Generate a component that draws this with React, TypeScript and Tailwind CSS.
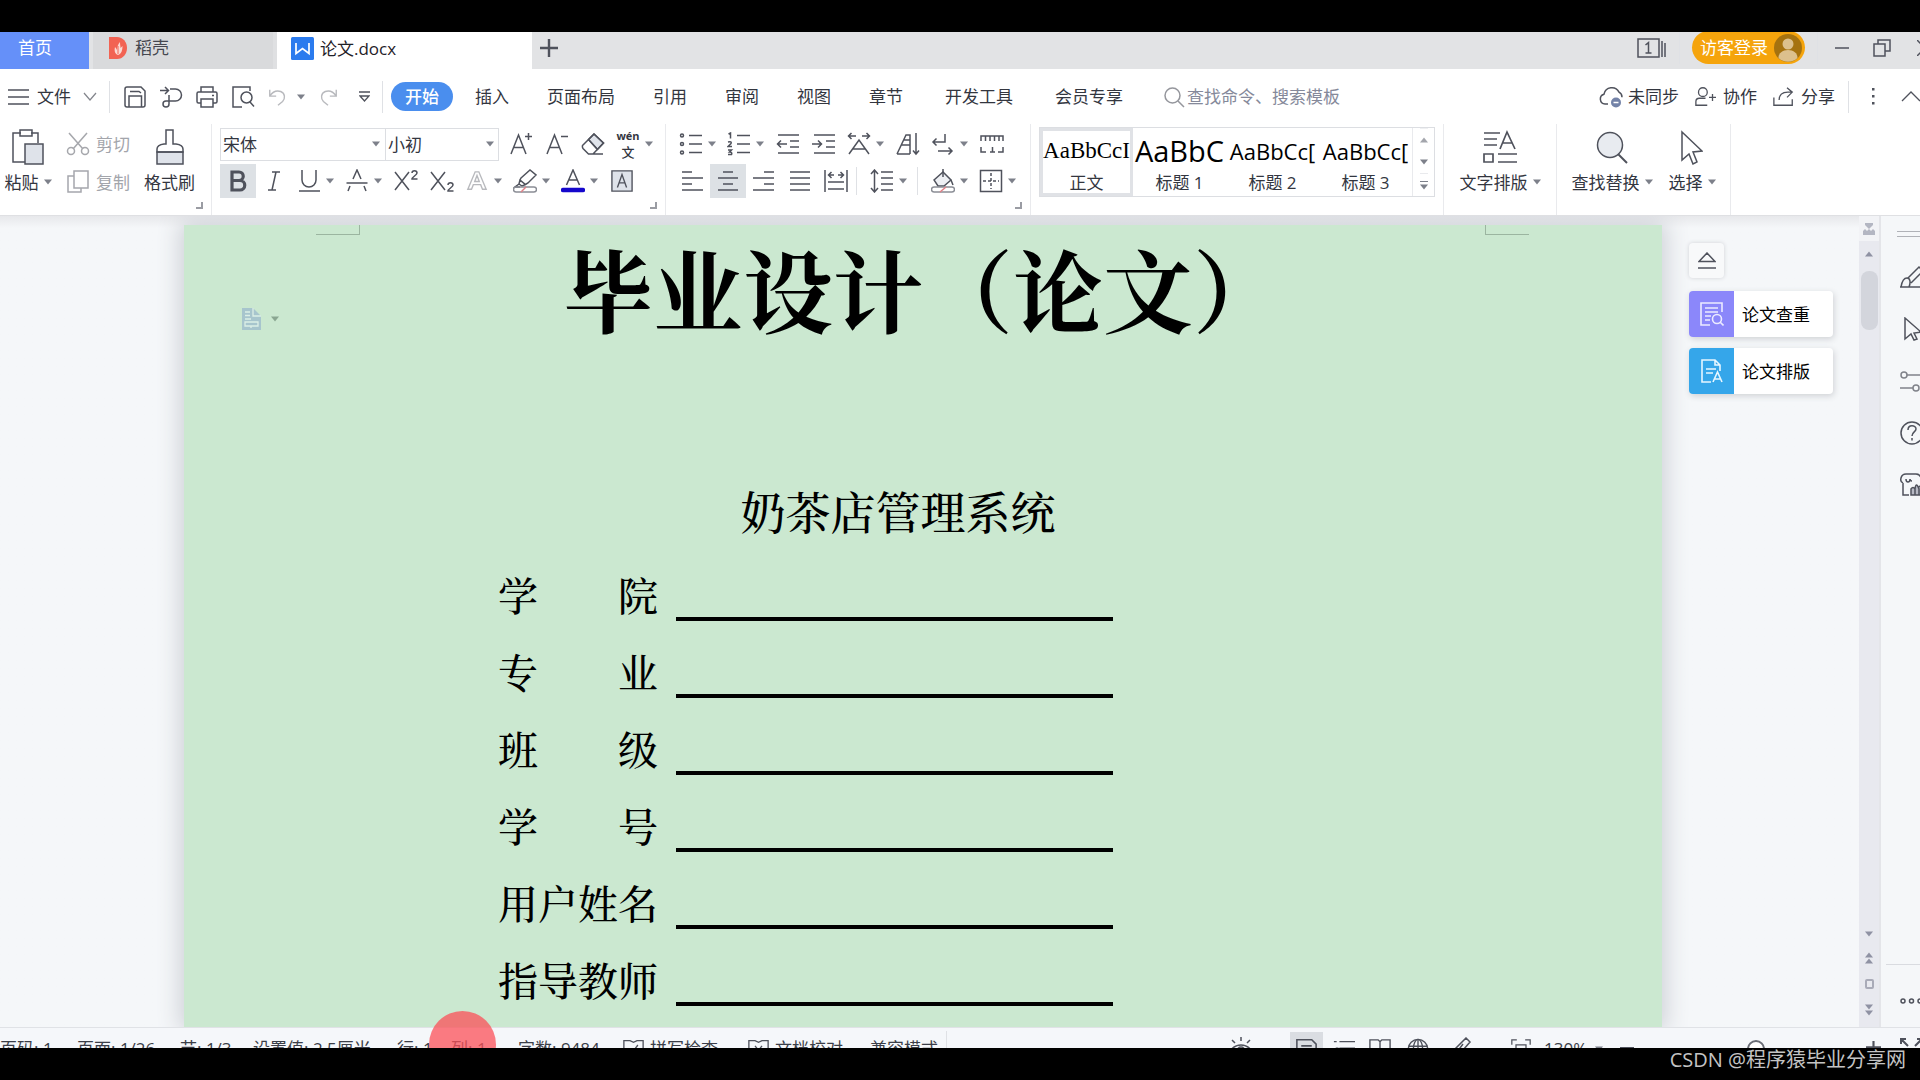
import type { ReactNode } from 'react';

const STROKE = '#4f525c';

type IconProps = {
  children: ReactNode;
  box?: string;
  className?: string;
  width?: number;
};

function Icon({ children, box = '0 0 24 24', className = 'size-6', width = 1.5 }: IconProps) {
  return (
    <svg viewBox={box} className={`shrink-0 ${className}`} fill="none" stroke={STROKE} strokeWidth={width} aria-hidden="true">
      {children}
    </svg>
  );
}

function Caret({ className = 'text-[#7d808a]' }: { className?: string }) {
  return (
    <svg viewBox="0 0 8 6" className={`h-[6px] w-2 shrink-0 ${className}`} fill="currentColor" aria-hidden="true">
      <path d="M0 .5h8L4 5.5z" />
    </svg>
  );
}

function Divider({ className = 'h-9' }: { className?: string }) {
  return <span className={`w-px shrink-0 bg-[#dfe1e5] ${className}`} />;
}

function Tool({ label, children, caret, active }: { label: string; children: ReactNode; caret?: boolean; active?: boolean }) {
  if (caret) {
    return (
      <button aria-label={label} className="flex h-[34px] w-12 items-center">
        <span className="flex w-[34px] justify-center">{children}</span>
        <Caret />
      </button>
    );
  }
  return (
    <button aria-label={label} className={`flex h-[34px] w-9 items-center justify-center ${active ? 'bg-[#dde1e5]' : ''}`}>
      {children}
    </button>
  );
}

function Corner() {
  return <span className="absolute right-2 bottom-[6px] size-[7px] border-r-2 border-b-2 border-[#9a9ca3]" />;
}

function TitleBar() {
  return (
    <header className="flex h-[37px] shrink-0 bg-[#e2e3e5] whitespace-nowrap">
      <button className="w-[89px] bg-[#6590f9] pr-8 pb-[6px] pl-[18px] text-left text-white">首页</button>
      <button className="ml-1 flex w-[184px] items-center gap-2 border-r-4 border-[#dfe0e2] bg-[#d9dadc] pb-[6px] pl-4 text-[#45474f]">
        <svg viewBox="0 0 18 22" className="h-[22px] w-[18px]" aria-hidden="true">
          <path d="M0 0h8c6 0 10 5 10 11s-4 11-10 11H0z" fill="#f26353" />
          <path d="M9 18c-3-1-4-4-3-8 1 1 1.500 2 2 3 0-3 1-6 3-8 0 3 .5 4 .5 6l2-2c0 4-1 8-4.500 9z" fill="#fbd9d3" />
          <path d="M9 17V9" stroke="#f26353" />
        </svg>
        稻壳
      </button>
      <button className="flex w-[255px] items-center gap-[6px] bg-white pb-[4px] pl-[14px] text-[#1f2128]">
        <svg viewBox="0 0 23 23" className="size-[23px]" aria-hidden="true">
          <rect width="23" height="23" rx="1.500" fill="#2b7bee" />
          <path d="M5 6v10.500l6.500-5 6.500 5V6" fill="none" stroke="#fff" strokeWidth="1.700" />
        </svg>
        论文.docx
      </button>
      <button aria-label="新建标签" className="flex w-[33px] items-center justify-center pb-[6px]">
        <Icon className="size-[18px]" box="0 0 18 18" width={2.4}><path d="M9 0v18M0 9h18" /></Icon>
      </button>
      <div className="ml-auto flex h-8 items-center">
        <button aria-label="窗口列表" className="mr-[13px]">
          <Icon className="h-5 w-[29px]" box="0 0 29 20" width={1.5}>
            <path d="M1 1h21v18H1zM25 3v16M28 5v14M8.500 7l3-2.500V15M8.500 15h6" />
          </Icon>
        </button>
        <Divider className="h-8" />
        <button className="mx-3 -mt-px flex h-[33px] items-center gap-[6px] rounded-full bg-[#f5a40c] pr-[3px] pl-2 text-white">
          访客登录
          <svg viewBox="0 0 28 28" className="size-7" aria-hidden="true">
            <circle cx="14" cy="14" r="14" fill="#a5720f" />
            <circle cx="14" cy="10" r="5.500" fill="#dcc08d" />
            <path d="M4.500 24c0-5 4-8 9.500-8s9.500 3 9.500 8c-5 5-14 5-19 0z" fill="#dcc08d" />
          </svg>
        </button>
        <Divider className="h-8" />
        <button aria-label="最小化" className="ml-[17px]"><Icon className="size-[14px]" box="0 0 14 14"><path d="M0 7h14" /></Icon></button>
        <button aria-label="还原" className="ml-6">
          <Icon className="size-[18px]" box="0 0 18 18"><path d="M1 5h11v12H1zM5 5V1h12v11h-5" /></Icon>
        </button>
        <button aria-label="关闭" className="ml-[26px] w-[3px] overflow-hidden"><Icon className="size-4" box="0 0 16 16"><path d="M0 0l16 16M16 0L0 16" /></Icon></button>
      </div>
    </header>
  );
}

function MenuBar() {
  return (
    <div className="flex h-[55px] shrink-0 items-center whitespace-nowrap text-[#33363f]">
      <button className="ml-2 flex items-center gap-2">
        <Icon className="h-5 w-[21px]" box="0 0 21 20"><path d="M0 3h21M0 10h21M0 17h21" /></Icon>
        文件
        <Icon className="ml-1 h-[9px] w-[14px] opacity-70" box="0 0 14 9" width={1.2}><path d="M1 1l6 7 6-7" /></Icon>
      </button>
      <Divider className="mr-[13px] ml-3 h-8" />
      <div className="flex items-center gap-3">
        <button aria-label="保存">
          <Icon><path d="M2 4q0-2 2-2h14l4 4v14q0 2-2 2H4q-2 0-2-2zM6 22V11h12.500v11M7 6.500h9l2 1.500" /></Icon>
        </button>
        <button aria-label="输出为PDF">
          <Icon><path d="M1 5.500h8M6 2L9.500 5.500 6 9M11 4h5.500a5.500 5.500 0 010 12H7a3 3 0 100 6c2 0 3-1.500 3-3V10" /></Icon>
        </button>
        <button aria-label="打印">
          <Icon><path d="M6 7V2h12v5M6 18H3.500Q2 18 2 16.500v-8Q2 7 3.500 7h17Q22 7 22 8.500v8q0 1.500-1.500 1.500H18M6 14h12v8H6zM17 10.500h2" /></Icon>
        </button>
        <button aria-label="打印预览">
          <Icon><path d="M11 22H2V2h17v4M19 17l4 4.500" /><circle cx="15.500" cy="12.500" r="5.500" /></Icon>
        </button>
      </div>
      <div className="ml-3 flex items-center gap-2">
        <button aria-label="撤销" className="opacity-40"><Icon className="size-[22px]"><path d="M3 4v7h7M3 11c4-6 9-6 12-5 5 2 5 8 2 11l-5 4" /></Icon></button>
        <Caret />
        <button aria-label="恢复" className="ml-1 opacity-40"><Icon className="size-[22px]"><path d="M21 4v7h-7M21 11c-4-6-9-6-12-5-5 2-5 8-2 11l5 4" /></Icon></button>
        <button aria-label="自定义快速访问" className="ml-3"><Icon className="h-3 w-[11px]" box="0 0 11 12" width={1.3}><path d="M0 1h11M1 5l4.500 5L10 5z" /></Icon></button>
      </div>
      <Divider className="mr-2 ml-3 h-8" />
      <nav className="flex items-center gap-[38px]">
        <a href="#start" className="-mr-4 rounded-full bg-[#4a8eee] px-[14px] py-[2px] font-medium text-white">开始</a>
        <a href="#insert">插入</a>
        <a href="#layout">页面布局</a>
        <a href="#reference">引用</a>
        <a href="#review">审阅</a>
        <a href="#view">视图</a>
        <a href="#chapter">章节</a>
      </nav>
      <nav className="ml-[42px] flex items-center gap-[42px]">
        <a href="#dev">开发工具</a>
        <a href="#member">会员专享</a>
      </nav>
      <label className="ml-10 flex items-center gap-[2px]">
        <Icon className="size-[22px] opacity-60" box="0 0 22 22"><circle cx="9.500" cy="9.500" r="7.500" /><path d="M15 15l6 6" /></Icon>
        <input aria-label="搜索" placeholder="查找命令、搜索模板" className="w-[180px] bg-transparent outline-none placeholder:text-[#85899a]" />
      </label>
      <div className="ml-auto flex items-center">
        <button className="mr-4 flex items-center gap-[5px]">
          <Icon>
            <path d="M9 19H6a5 5 0 01-1-9.800 8 8 0 0115-2c2 1 3 3 3 5" />
            <circle cx="17" cy="17.500" r="5" fill="#7483a8" stroke="none" /><path d="M14.500 17.500h5" stroke="#fff" />
          </Icon>
          未同步
        </button>
        <button className="mr-4 flex items-center gap-[7px]">
          <Icon className="size-[21px]"><circle cx="9" cy="7" r="5" /><path d="M14 22H1v-4q0-4 4-4h7M16 13h8M20 9v8" /></Icon>
          协作
        </button>
        <button className="flex items-center gap-[7px]">
          <Icon className="size-[21px]"><path d="M1 13v9h21v-7M7 16c0-6 4-9 10-9h4M16 2l6 5-6 6" /></Icon>
          分享
        </button>
        <Divider className="ml-[13px] h-8" />
        <button aria-label="更多" className="ml-[23px]">
          <svg viewBox="0 0 4 18" className="h-[18px] w-1" fill={STROKE}><path d="M0 0h2.500v2.500H0zM0 7h2.500v2.500H0zM0 14h2.500v2.500H0z" /></svg>
        </button>
        <button aria-label="折叠功能区" className="ml-[25px] w-[19px] overflow-hidden"><Icon className="h-[11px] w-5" box="0 0 20 11" width={1.3}><path d="M1 10l9-9 9 9" /></Icon></button>
      </div>
    </div>
  );
}

function BigLabel({ children }: { children: ReactNode }) {
  return <span className="flex h-[26px] items-center gap-[5px]">{children}</span>;
}

const styleCards = [
  { name: '正文', sample: 'AaBbCcI', look: "font-['Liberation_Serif'] text-[23px]" },
  { name: '标题 1', sample: 'AaBbC', look: "font-['Open_Sans'] text-[29px] font-medium" },
  { name: '标题 2', sample: 'AaBbCc[', look: "font-['Open_Sans'] text-[22px] font-medium" },
  { name: '标题 3', sample: 'AaBbCc[', look: "font-['Open_Sans'] text-[22px] font-medium" },
];

function Ribbon() {
  return (
    <div className="flex h-[91px] shrink-0 whitespace-nowrap text-[#33363f]">
      <section className="relative flex w-[212px] border-r border-[#e9eaed] pt-[5px]">
        <button className="flex w-14 flex-col items-center gap-1">
          <Icon className="h-9 w-8" box="0 0 32 36">
            <path d="M9 4H1v29h12M19 4h7v10" /><path d="M8 1h12v6H8z" /><path d="M13 15h18v20H13z" fill="#dfe3ea" />
          </Icon>
          <BigLabel>粘贴<Caret /></BigLabel>
        </button>
        <div className="ml-[10px] flex flex-col text-[#a3a5ab]">
          <button className="-mt-[2px] flex h-[34px] items-center gap-[6px]">
            <Icon className="size-6 opacity-50"><path d="M3 1l14 16M21 1L7 17" /><circle cx="5" cy="19" r="3.500" /><circle cx="19" cy="19" r="3.500" /></Icon>
            剪切
          </button>
          <button className="mt-1 flex h-[34px] items-center gap-[6px]">
            <Icon className="size-6 opacity-50"><path d="M8 1h14v17H8zM8 6H2v16h13v-4" /></Icon>
            复制
          </button>
        </div>
        <button className="ml-[14px] flex flex-col items-center gap-1">
          <Icon className="h-9 w-7" box="0 0 28 36">
            <path d="M1 23h26v12H1z" fill="#dfe3ea" /><path d="M10 1h7v14h3q7 1 7 5v3H1v-3q0-4 7-5h2z" />
          </Icon>
          <BigLabel>格式刷</BigLabel>
        </button>
        <Corner />
      </section>

      <section className="relative w-[454px] border-r border-[#e9eaed] pt-[3px] pl-2">
        <div className="flex items-center">
          <div className="mr-1 flex h-[33px] w-[279px] border border-[#dcdee2]">
            <label className="relative flex w-[165px] items-center border-r border-[#dcdee2]">
              <select aria-label="字体" className="w-full appearance-none bg-transparent pl-[2px] outline-none"><option>宋体</option></select>
              <span className="pointer-events-none absolute right-[5px]"><Caret /></span>
            </label>
            <label className="relative flex flex-1 items-center">
              <select aria-label="字号" className="w-full appearance-none bg-transparent pl-[2px] outline-none"><option>小初</option></select>
              <span className="pointer-events-none absolute right-1"><Caret /></span>
            </label>
          </div>
          <Tool label="增大字号"><Icon><path d="M2 22L9.500 3 17 22M4.500 15.500h10M19.500 1v7M16 4.500h7" /></Icon></Tool>
          <Tool label="减小字号"><Icon><path d="M2 22L9.500 3 17 22M4.500 15.500h10M16 4.500h7" /></Icon></Tool>
          <Tool label="清除格式"><Icon><path d="M7.500 7.500L13 2l9.500 9-6 6.500z" fill="#dfe3ea" /><path d="M1.500 13.500L13 2l9.500 9L12 22H7.500L2 16.500q-1-1.500-.5-3zM7.500 7.500l9 10M7 22h15" /></Icon></Tool>
          <Tool label="拼音指南" caret>
            <span className="flex flex-col items-center text-[11px] font-bold"><span className="leading-[16px]">wén</span><span className="text-[13px] leading-[16px] font-medium">文</span></span>
          </Tool>
        </div>
        <div className="flex pt-[3px]">
          <Tool label="加粗" active><Icon width={3.2}><path d="M6 3h7a4.200 4.200 0 010 8.500H6zM6 11.500h8a4.700 4.700 0 010 9.500H6zM6 2v20" /></Icon></Tool>
          <Tool label="倾斜"><Icon><path d="M10 3h8M6 21h8M14 3l-4 18" /></Icon></Tool>
          <Tool label="下划线" caret><Icon><path d="M5 1v10a7 7 0 0014 0V1M2 22h21" /></Icon></Tool>
          <Tool label="删除线" caret><Icon><path d="M8 10l4-9 4 9M1.500 14h21M5 17l-2 5M19 17l2 5" /></Icon></Tool>
          <Tool label="上标"><Icon><path d="M1 3l14 18M15 3L1 21M18 4c0-3 5-3 5 0 0 2-5 4-5 6h5.500" /></Icon></Tool>
          <Tool label="下标"><Icon><path d="M1 3l14 18M15 3L1 21M18 16c0-3 5-3 5 0 0 2-5 4-5 6h5.500" /></Icon></Tool>
          <Tool label="文字效果" caret><span className="opacity-40"><Icon className="size-[22px]"><path d="M2 21L10 2h4l8 19h-4l-2-5H8l-2 5zM9.500 12.500h5L12 6z" /></Icon></span></Tool>
          <Tool label="突出显示" caret>
            <Icon><path d="M8 9L17 1l6 5-8 8-2.500 1.500L7 11zM7 11l-1 4 3 2 3.500-1.500M6 15l-4 3h5" /><path d="M3 18h18q2.500 0 2.500 2.500T21 23H3Q.5 23 .5 20.500T3 18z" stroke="#8a8d95" /><path d="M8 23l5-5" stroke="#e07f86" /></Icon>
          </Tool>
          <Tool label="字体颜色" caret><Icon><path d="M5.500 16L12 1l6.500 15M8 11h8" /><path d="M2 21h20" stroke="#1507cc" strokeWidth="4.500" strokeLinecap="round" /></Icon></Tool>
          <Tool label="字符底纹"><Icon className="size-[22px]"><path d="M1 1h22v22H1z" fill="#dfe3ea" /><path d="M7 19l5-14 5 14M8.500 14h7" /></Icon></Tool>
        </div>
        <Corner />
      </section>

      <section className="relative w-[365px] border-r border-[#e9eaed] pt-[3px] pl-2">
        <div className="flex">
          <Tool label="项目符号" caret><Icon><path d="M10 3.500h13M10 12h13M10 20.500h13" /><circle cx="3" cy="3.500" r="1.500" /><circle cx="3" cy="12" r="1.500" /><circle cx="3" cy="20.500" r="1.500" /></Icon></Tool>
          <Tool label="编号" caret><Icon><path d="M10 3.500h13M10 12h13M10 20.500h13M1.500 2l2-1v5.500M1 10q4-1 3 1.500L1 14.500h4M1 18h3.500l-2 2q3 0 2 2.500H1" /></Icon></Tool>
          <Tool label="减少缩进"><Icon><path d="M2 3h21M14 9h9M14 15h9M2 21h21M1 12h10M5 8.500L1.500 12 5 15.500" /></Icon></Tool>
          <Tool label="增加缩进"><Icon><path d="M2 3h21M14 9h9M14 15h9M2 21h21M0 12h10M6 8.500L9.500 12 6 15.500" /></Icon></Tool>
          <Tool label="中文版式" caret><Icon><path d="M2 22L12 8l10 14M6 17h12M1 4h8M4.500 1L1.500 4l3 3M15 4h8M19.500 1l3 3-3 3" /></Icon></Tool>
          <Tool label="排序"><Icon><path d="M1 22L10 3h4v19M5.500 13H14M8 8h6M1 22h13M20 1v21M17 18.500l3 3.500 3-3.500" /></Icon></Tool>
          <Tool label="显示标记" caret><Icon><path d="M14 2v8H2M5.500 6.500L2 10l3.500 3.500M7 19h14M17.500 15.500L21 19l-3.500 3.500" /></Icon></Tool>
          <Tool label="标尺"><Icon><path d="M1 9V4h22v5M5.500 4v5M10 4v5M14.500 4v5M19 4v5M1 15v5h5M10 20h5M12.500 15v5M18 20h5v-5" /></Icon></Tool>
        </div>
        <div className="flex items-center pt-[3px]">
          <Tool label="左对齐"><Icon><path d="M2 3h10M2 9h21M2 15h10M2 21h21" /></Icon></Tool>
          <Tool label="居中" active><Icon><path d="M7 3h10M2 9h20M7 15h10M2 21h20" /></Icon></Tool>
          <Tool label="右对齐"><Icon><path d="M12 3h10M1 9h21M12 15h10M1 21h21" /></Icon></Tool>
          <Tool label="两端对齐"><Icon><path d="M2 3h20M2 9h20M2 15h20M2 21h20" /></Icon></Tool>
          <Tool label="分散对齐"><Icon><path d="M1 1v22M23 1v22M4 13h16M4 20h16M5 6h5M7.500 3L4.500 6l3 3M14 6h5M16.500 3l3 3-3 3" /></Icon></Tool>
          <Divider className="mr-2 ml-[2px] h-7" />
          <Tool label="行距" caret><Icon><path d="M11 3h12M11 9h12M11 15h12M11 21h12M4.500 1v22M1 5l3.500-4L8 5M1 19l3.500 4L8 19" /></Icon></Tool>
          <Divider className="mr-2 ml-1 h-7" />
          <Tool label="底纹颜色" caret>
            <Icon><path d="M3 11L12 3l8 8-7 6H7z" fill="#eef0f4" /><path d="M12 0v8M20 11l2 5" /><path d="M3 18h18q2.500 0 2.500 2.500T21 23H3Q.5 23 .5 20.500T3 18z" stroke="#8a8d95" /><path d="M9 23l6-5" stroke="#e07f86" /></Icon>
          </Tool>
          <Tool label="边框" caret><Icon><path d="M1.500 1.500h21v21h-21z" /><path d="M12 4v16M4 12h16" strokeDasharray="3 2" /></Icon></Tool>
        </div>
        <Corner />
      </section>

      <section className="w-[413px] border-r border-[#e9eaed] pt-[3px] pl-2">
        <div className="flex h-[70px] w-[396px] border border-[#dcdee2]">
          {styleCards.map((card, i) => (
            <button
              key={card.name}
              className={`flex w-[93px] shrink-0 flex-col items-center overflow-hidden ${i === 0 ? 'border-[3px] border-[#e0e2e6]' : 'pt-[3px]'}`}
            >
              <span className={`h-[42px] leading-[40px] text-black ${card.look}`}>{card.sample}</span>
              <span className="leading-[20px]">{card.name}</span>
            </button>
          ))}
          <div className="flex flex-1 flex-col items-center divide-y divide-[#e9eaed] border-l border-[#e9eaed]">
            <button aria-label="上一行" className="flex flex-1 rotate-180 items-center opacity-70"><Caret /></button>
            <button aria-label="下一行" className="flex flex-1 items-center"><Caret /></button>
            <button aria-label="更多样式" className="flex flex-1 flex-col items-center justify-center gap-[2px]"><span className="h-px w-2 bg-[#7d808a]" /><Caret /></button>
          </div>
        </div>
      </section>

      <section className="flex w-[113px] justify-center border-r border-[#e9eaed] pt-[5px]">
        <button className="flex flex-col items-center gap-1">
          <Icon className="h-9 w-[34px]" box="0 0 34 36" width={1.7}><path d="M1 4h16M1 10h13M1 16h13M17 20l7-17 8 17M20 14h9M1 25h9v8H1zM15 25h19M15 33h19" /></Icon>
          <BigLabel>文字排版<Caret /></BigLabel>
        </button>
      </section>
      <section className="flex w-[174px] justify-center gap-4 border-r border-[#e9eaed] pt-[5px]">
        <button className="flex flex-col items-center gap-1">
          <Icon className="h-9 w-8" box="0 0 32 36"><circle cx="14" cy="16" r="12.500" fill="#e8ebf0" /><path d="M22 25l9 9" strokeWidth="2" /></Icon>
          <BigLabel>查找替换<Caret /></BigLabel>
        </button>
        <button className="flex flex-col items-center gap-1">
          <Icon className="h-9 w-[22px]" box="0 0 22 36"><path d="M1 3l20 19-9 1 4 10-4 2-4-10-7 6z" /></Icon>
          <BigLabel>选择<Caret /></BigLabel>
        </button>
      </section>
    </div>
  );
}

const fields = ['学院', '专业', '班级', '学号', '用户姓名', '指导教师'];

function Paper() {
  return (
    <article className="relative flex-1 overflow-hidden bg-[#cbe8d0] font-['Noto_Serif_CJK_SC','Noto_Sans_CJK_SC',serif] text-black shadow-[0_0_22px_4px_#cdd0d6]">
      <span className="absolute top-0 left-[132px] h-[10px] w-11 border-r border-b border-[#9bb5a0]" />
      <span className="absolute top-0 right-[133px] h-[10px] w-11 border-b border-l border-[#9bb5a0]" />
      <button aria-label="段落布局" className="absolute top-[83px] left-[58px] flex items-center gap-[10px]">
        <svg viewBox="0 0 19 22" className="h-[22px] w-[19px]" aria-hidden="true">
          <path d="M0 0h11l8 8v14H0z" fill="#a7c5cd" />
          <path d="M11 0v8h8M3 4h5M3 7.500h5M3 11h6M3 14h13v4H3zM9 18v2" fill="none" stroke="#dcefe6" strokeWidth="1.300" />
        </svg>
        <Caret className="text-[#8aa691]" />
      </button>
      <h1 className="text-center text-[90px] leading-[124px] font-bold">毕业设计（论文）</h1>
      <h2 className="mt-[132px] pr-[50px] text-center text-[45px] leading-[60px] font-medium">奶茶店管理系统</h2>
      <dl className="mt-[15px] ml-[314px] text-[40px] leading-[75px] font-medium">
        {fields.map((name) => (
          <div key={name} className="flex h-[77px]">
            <dt className="flex w-40 justify-between">
              {name.split('').map((ch) => <span key={ch}>{ch}</span>)}
            </dt>
            <dd className="mt-[61px] ml-[18px] h-1 w-[437px] bg-black" />
          </div>
        ))}
      </dl>
    </article>
  );
}

function Workspace() {
  return (
    <main className="flex min-h-0 flex-1 overflow-hidden border-t border-[#dfe0e3] bg-[#f5f7f9]">
      <div className="flex flex-1 overflow-hidden bg-linear-to-b from-[#e7e8eb] to-[#f5f7f9] to-[12px] pt-[9px] pl-[184px]">
        <Paper />
        <aside className="z-10 flex w-[197px] flex-col items-start pt-[18px] pl-[27px]">
          <button aria-label="收起" className="flex size-[35px] items-center justify-center rounded bg-[#f8f9fa] shadow-[0_0_4px_#d0d2d6]">
            <Icon className="size-[18px]" box="0 0 18 18"><path d="M9 1l8 8.500H1zM0 16h18" /></Icon>
          </button>
          <button className="mt-[13px] flex h-[46px] w-36 items-center overflow-hidden rounded bg-white text-black shadow-[1px_2px_6px_#cfd1d5]">
            <span className="mr-2 flex h-full w-[45px] items-center justify-center bg-[#8b87fa]">
              <svg viewBox="0 0 24 24" className="size-6" fill="none" stroke="#ecebff" strokeWidth="1.600"><path d="M10 23H1V1h21v9M5 6h13M5 10h13M5 14h6M5 18h5" /><circle cx="17" cy="17" r="4.500" /><path d="M20 20l3.500 3.500" /></svg>
            </span>
            论文查重
          </button>
          <button className="mt-[11px] flex h-[46px] w-36 items-center overflow-hidden rounded bg-white text-black shadow-[1px_2px_6px_#cfd1d5]">
            <span className="mr-2 flex h-full w-[45px] items-center justify-center bg-[#35a6ea]">
              <svg viewBox="0 0 24 24" className="size-6" fill="none" stroke="#e6f6ff" strokeWidth="1.600"><path d="M11 23H2V1h13l5 5v6M15 1v5h5M6 10h10M6 14h7M13 23l4.500-10L22 23M14.500 20h6" /></svg>
            </span>
            论文排版
          </button>
        </aside>
      </div>
      <div className="flex w-5 flex-col items-center bg-[#e8e9ef]">
        <div className="flex h-[25px] w-full items-center justify-center bg-[#f2f3f6]">
          <svg viewBox="0 0 12 12" className="size-3" fill="#b3b6c2"><path d="M2 0h8v2L6 6 2 2zM0 8l2-2 2 2v4H0zM4 8l2-2 2 2v4H4zM8 8l2-2 2 2v4H8z" /></svg>
        </div>
        <span className="mt-[10px] rotate-180"><Caret className="text-[#8f92a3]" /></span>
        <span className="mt-[14px] h-[59px] w-[17px] rounded-lg bg-[#d3d5dc]" />
        <div className="mt-auto flex flex-col items-center gap-[15px] pb-[11px]">
          <Caret className="text-[#8f92a3]" />
          <span className="flex rotate-180 flex-col"><Caret className="text-[#8f92a3]" /><Caret className="text-[#8f92a3]" /></span>
          <span className="h-[10px] w-[9px] rounded-[2px] border-2 border-[#a9abb8]" />
          <span className="flex flex-col"><Caret className="text-[#8f92a3]" /><Caret className="text-[#8f92a3]" /></span>
        </div>
      </div>
      <div className="flex w-[41px] flex-col items-end overflow-hidden border-l-2 border-[#e4e5e9] pt-[15px]">
        <span className="h-[6px] w-[23px] border-y border-[#b0b2b8]" />
        <div className="mt-7 flex w-5 flex-col gap-7">
          <button aria-label="样式"><Icon><path d="M1 22c1-6 3-9 6-9s4 4 2 9zM8 13L19 2l4 4-12 12M0 22h24" /></Icon></button>
          <button aria-label="选择窗格"><Icon><path d="M5 1l16 14-7 1 3 6-3 1-3-6-6 5z" /></Icon></button>
          <button aria-label="属性" className="opacity-70"><Icon><circle cx="4" cy="6" r="3" /><path d="M7 6h17M0 19h13" /><circle cx="16" cy="19" r="3" /></Icon></button>
          <button aria-label="帮助"><Icon><circle cx="12" cy="12" r="11" /><path d="M8 9c0-6 8-5 8-1 0 3-4 3-4 7M12 17v2.500" /></Icon></button>
          <button aria-label="应用"><Icon><path d="M3 10Q0 9 1 5q1-4 5-4h10q4 0 5 4l1 5M3 10v12h6M6 6q0 3 2 3t2-3M10 6q0 2 2 2" /><path d="M11 22v-6q2-3 4 0 1-8 4 0v6zM15 16v6M19 14q3-3 3 0v8h-3" fill="#b7b9c4" /></Icon></button>
        </div>
        <span className="mt-auto h-px w-[34px] shrink-0 bg-[#d9dbe0]" />
        <button aria-label="更多工具" className="mt-8 mb-[22px] w-5 shrink-0"><Icon className="h-2 w-6" box="0 0 24 8"><circle cx="3" cy="4" r="2" /><circle cx="11.500" cy="4" r="2" /><circle cx="20" cy="4" r="2" /></Icon></button>
      </div>
    </main>
  );
}

function StatusBar() {
  return (
    <footer className="h-[21px] shrink-0 overflow-hidden border-t border-[#e0e2e6] bg-[#f5f7fa] whitespace-nowrap text-[#3b3e48]">
      <div className="flex h-[41px] items-center">
        <span className="w-[62px]">页码: 1</span>
        <Divider className="mr-[14px]" />
        <span className="w-[88px]">页面: 1/26</span>
        <Divider className="mr-[14px]" />
        <span className="w-[73px]">节: 1/3</span>
        <span className="w-[129px]">设置值: 2.5厘米</span>
        <Divider className="mr-[14px]" />
        <span className="w-[54px]">行: 1</span>
        <span className="w-[52px]">列: 1</span>
        <Divider className="mr-[14px]" />
        <span className="w-[91px]">字数: 9484</span>
        <Divider className="mr-[13px]" />
        <button className="flex w-[111px] items-center gap-[6px]">
          <Icon className="size-[21px]"><path d="M1 3h7l4 2 4-2h7v19H1zM7 12l4 4 6-8" /></Icon>拼写检查
        </button>
        <Divider className="mr-[13px]" />
        <button className="flex items-center gap-[6px]">
          <Icon className="size-[21px]"><path d="M1 3h7l4 2 4-2h7v19H1zM8 9l4 5 4-5M8 19l4-5 4 5" /></Icon>文档校对
        </button>
        <span className="mr-2 ml-[27px]">兼容模式</span>
        <Divider />
        <div className="ml-auto flex items-center">
          <button aria-label="护眼模式" className="mr-5"><Icon className="size-6"><path d="M1 14c6-8 16-8 22 0-6 8-16 8-22 0zM12 0v4M3 3l3 3M21 3l-3 3" /><circle cx="12" cy="14" r="4" /></Icon></button>
          <Divider className="mr-4" />
          <button aria-label="页面视图" className="mr-[10px] flex h-[34px] w-[33px] items-center justify-center bg-[#dadde2]"><Icon className="size-[21px]"><path d="M1 2h17l5 5v15H1zM6 9h12M6 15h12" strokeWidth="1.800" /></Icon></button>
          <button aria-label="大纲视图" className="mr-[14px]"><Icon className="size-[22px]"><path d="M7 4h17M7 11h17M7 18h17M1 4h3M3 11h3M3 18h3" /></Icon></button>
          <button aria-label="阅读版式" className="mr-4"><Icon className="size-[22px]"><path d="M12 4v17M1 2h9l2 2 2-2h9v18H1z" /></Icon></button>
          <button aria-label="Web版式" className="mr-5"><Icon className="size-[22px]"><circle cx="12" cy="12" r="10.500" /><ellipse cx="12" cy="12" rx="5" ry="10.500" /><path d="M2 9h20M2 15h20M12 2v20" /></Icon></button>
          <button aria-label="写作模式" className="mr-4"><Icon className="size-6"><path d="M2 22l2-8L17 1l4 4L8 20zM14 7l-6 8" /></Icon></button>
          <Divider className="mr-[21px]" />
          <button aria-label="最佳缩放" className="mr-[13px]"><Icon className="size-5"><path d="M1 7V1h6M17 1h6v6M1 17v6h6M17 23h6v-6M6 7h12v12H6z" /></Icon></button>
          <button className="flex w-[76px] items-center gap-2">130%<Caret /></button>
          <button aria-label="缩小" className="mr-1"><Icon className="size-[14px]" box="0 0 14 14" width={2}><path d="M0 6h14" /></Icon></button>
          <input
            type="range"
            aria-label="缩放比例"
            defaultValue={53}
            className="mr-1 h-[18px] w-[224px] appearance-none bg-transparent [&::-webkit-slider-thumb]:size-[18px] [&::-webkit-slider-thumb]:appearance-none [&::-webkit-slider-thumb]:rounded-full [&::-webkit-slider-thumb]:border-2 [&::-webkit-slider-thumb]:border-[#6a6d76] [&::-webkit-slider-thumb]:bg-white"
          />
          <button aria-label="放大" className="mr-[19px]"><Icon className="size-[15px]" box="0 0 14 14" width={2}><path d="M0 6h14M7 0v14" /></Icon></button>
          <button aria-label="全屏" className="w-5 overflow-hidden"><Icon width={2}><path d="M1 7V2h5M1 2l7 7M17 2h5v5M22 2l-7 7M1 17v5h5M22 17v5h-5" /></Icon></button>
        </div>
      </div>
    </footer>
  );
}

export default function App() {
  return (
    <div className="flex h-screen flex-col overflow-hidden bg-black pt-8 font-['Open_Sans','Noto_Sans_CJK_SC',sans-serif] text-[17px] leading-[25px]">
      <div className="relative flex min-h-0 flex-1 flex-col overflow-hidden bg-white">
        <TitleBar />
        <MenuBar />
        <Ribbon />
        <Workspace />
        <StatusBar />
        <span className="pointer-events-none absolute -bottom-[30px] left-[429px] z-20 size-[67px] rounded-full bg-[#fb5058]/75" />
      </div>
      <p className="h-8 shrink-0 pr-[14px] text-right text-[20px] leading-[24px] text-[#c4c4c4]">CSDN @程序猿毕业分享网</p>
    </div>
  );
}
